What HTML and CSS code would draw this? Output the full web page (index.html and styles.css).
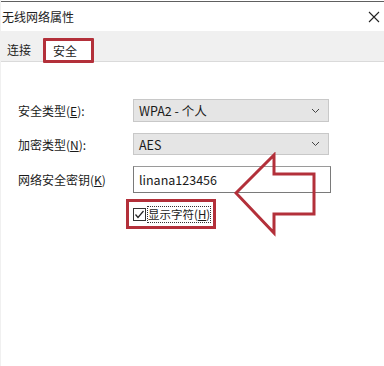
FILE: index.html
```html
<!DOCTYPE html>
<html>
<head>
<meta charset="utf-8">
<link rel="stylesheet" href="styles.css">
</head>
<body>
<div class="window">
  <div class="titlebar">
    <span class="title">无线网络属性</span>
    <svg class="close" width="12" height="12" viewBox="0 0 12 12"><path d="M1 1L11 11M11 1L1 11" stroke="#222" stroke-width="1.1" fill="none"/></svg>
  </div>
  <div class="tabbar">
    <span class="tab">连接</span>
    <span class="tab active">安全</span>
  </div>
  <div class="content">
    <div class="row r1">
      <span class="label">安全类型(<u>E</u>):</span>
      <div class="select"><span>WPA2 - 个人</span><svg width="9" height="6" viewBox="0 0 9 6"><path d="M1 1L4.5 4.5L8 1" stroke="#444" stroke-width="1" fill="none"/></svg></div>
    </div>
    <div class="row r2">
      <span class="label">加密类型(<u>N</u>):</span>
      <div class="select s2"><span>AES</span><svg width="9" height="6" viewBox="0 0 9 6"><path d="M1 1L4.5 4.5L8 1" stroke="#444" stroke-width="1" fill="none"/></svg></div>
    </div>
    <div class="row r3">
      <span class="label">网络安全密钥(<u>K</u>)</span>
      <div class="input">linana123456</div>
    </div>
    <div class="checkrow">
      <div class="checkwrap">
        <svg class="cb" width="13" height="13" viewBox="0 0 13 13"><rect x="0.5" y="0.5" width="12" height="12" fill="#fff" stroke="#333"/><path d="M2.5 6.5L5 9.5L10.5 3" stroke="#222" stroke-width="1.2" fill="none"/></svg>
        <span class="cbtext">显示字符(<u>H</u>)</span>
      </div>
    </div>
  </div>
  <svg class="arrow" width="90" height="90" viewBox="0 0 90 90"><path d="M2 41L40 3V22H80V62H40V81Z" fill="none" stroke="#b3303a" stroke-width="3" stroke-linejoin="miter"/></svg>
</div>
</body>
</html>
```
FILE: styles.css
```css
html, body {
  margin: 0;
  padding: 0;
  background: #fff;
}
body {
  font-family: "Noto Sans CJK SC", "Noto Sans", sans-serif;
  font-size: 12px;
  color: #1a1a1a;
}
.window {
  position: relative;
  width: 384px;
  height: 366px;
  box-sizing: border-box;
  border-left: 1px solid #f0f0f0;
  overflow: hidden;
}
.titlebar {
  margin-top: 1px;
  border-top: 1px solid #606060;
  height: 29px;
  display: flex;
  align-items: center;
  justify-content: space-between;
  padding: 0 4px 0 1px;
}
.title {
  font-size: 12px;
  color: #222;
}
.tabbar {
  background: #f0f0f0;
  border-bottom: 1px solid #dadada;
  display: flex;
  align-items: flex-end;
  padding-left: 5px;
  box-sizing: border-box;
  height: 31px;
}
.tab {
  height: 22px;
  line-height: 22px;
  padding: 0 1px;
  color: #222;
}
.tab.active {
  margin-left: 11px;
  margin-bottom: -2px;
  width: 37px;
  height: 19px;
  line-height: 19px;
  padding-left: 7px;
  background: #fff;
  border: 3px solid #b3303a;
  border-radius: 1px;
}
.content {
  padding-left: 17px;
  padding-top: 37px;
}
.row {
  display: flex;
  align-items: center;
}
.label {
  width: 115px;
}
.select {
  width: 196px;
  height: 22px;
  background: #e5e5e5;
  border: 1px solid #c8c8c8;
  display: flex;
  align-items: center;
  justify-content: space-between;
  padding: 0 8px 0 5px;
  box-sizing: border-box;
  font-size: 12.5px;
}
.r1 .select { height: 23px; }
.r2 { margin-top: 11px; }
.r3 { margin-top: 11px; }
.input {
  width: 198px;
  height: 27px;
  border: 1px solid #7a7a7a;
  border-top-color: #9a9a9a;
  box-sizing: border-box;
  padding: 3px 0 0 5px;
  font-size: 12.5px;
}
.checkrow {
  margin-top: 6px;
  padding-left: 108px;
}
.checkwrap {
  display: inline-flex;
  align-items: center;
  height: 24px;
  border: 3px solid #b3303a;
  padding: 0 3px 0 4px;
}
.cb { flex: none; }
.cbtext {
  margin-left: 2px;
  outline: 1px dotted #333;
  padding: 0;
  font-size: 11.5px;
  line-height: 15px;
}
.arrow {
  position: absolute;
  left: 233px;
  top: 152px;
}
```
